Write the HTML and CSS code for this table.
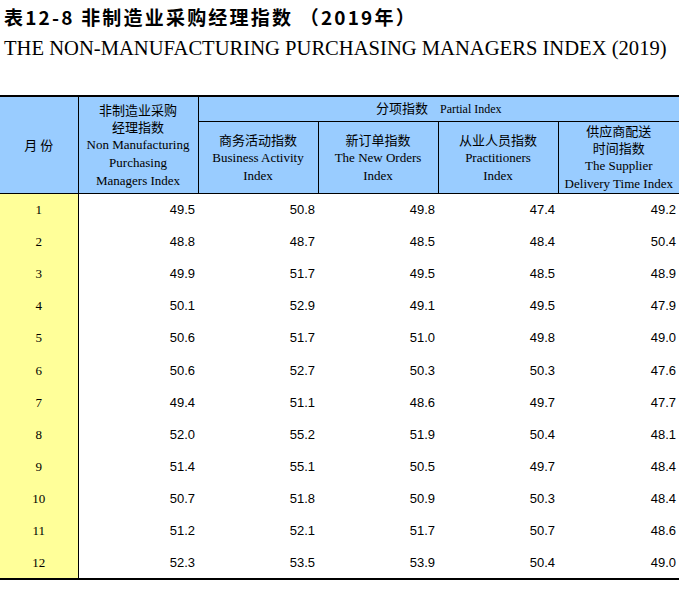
FILE: index.html
```html
<!DOCTYPE html>
<html lang="zh">
<head>
<meta charset="utf-8">
<title>表12-8 非制造业采购经理指数</title>
<link rel="stylesheet" href="styles.css">
</head>
<body>
<div class="titles">
  <h1 class="title-cn">表12-8 非制造业采购经理指数 （2019年）</h1>
  <h2 class="title-en">THE NON-MANUFACTURING PURCHASING MANAGERS INDEX (2019)</h2>
</div>
<table class="pmi">
  <colgroup>
    <col class="c-month">
    <col class="c-num">
    <col class="c-num">
    <col class="c-num">
    <col class="c-num">
    <col class="c-last">
  </colgroup>
  <thead>
    <tr class="h1">
      <th rowspan="2" class="hm"><span class="cn">月 份</span></th>
      <th rowspan="2" class="hc"><span class="cn">非制造业采购<br>经理指数</span><br><span class="en">Non Manufacturing<br>Purchasing<br>Managers Index</span></th>
      <th colspan="4" class="hp"><span class="cn">分项指数</span>&nbsp;&nbsp; <span class="en">Partial Index</span></th>
    </tr>
    <tr class="h2">
      <th class="hc"><span class="cn">商务活动指数</span><br><span class="en">Business Activity<br>Index</span></th>
      <th class="hc"><span class="cn">新订单指数</span><br><span class="en">The New Orders<br>Index</span></th>
      <th class="hc"><span class="cn">从业人员指数</span><br><span class="en">Practitioners<br>Index</span></th>
      <th class="hc hl"><span class="cn">供应商配送<br>时间指数</span><br><span class="en">The Supplier<br>Delivery Time Index</span></th>
    </tr>
  </thead>
  <tbody>
    <tr><td class="m">1</td><td>49.5</td><td>50.8</td><td>49.8</td><td>47.4</td><td class="l">49.2</td></tr>
    <tr><td class="m">2</td><td>48.8</td><td>48.7</td><td>48.5</td><td>48.4</td><td class="l">50.4</td></tr>
    <tr><td class="m">3</td><td>49.9</td><td>51.7</td><td>49.5</td><td>48.5</td><td class="l">48.9</td></tr>
    <tr><td class="m">4</td><td>50.1</td><td>52.9</td><td>49.1</td><td>49.5</td><td class="l">47.9</td></tr>
    <tr><td class="m">5</td><td>50.6</td><td>51.7</td><td>51.0</td><td>49.8</td><td class="l">49.0</td></tr>
    <tr><td class="m">6</td><td>50.6</td><td>52.7</td><td>50.3</td><td>50.3</td><td class="l">47.6</td></tr>
    <tr><td class="m">7</td><td>49.4</td><td>51.1</td><td>48.6</td><td>49.7</td><td class="l">47.7</td></tr>
    <tr><td class="m">8</td><td>52.0</td><td>55.2</td><td>51.9</td><td>50.4</td><td class="l">48.1</td></tr>
    <tr><td class="m">9</td><td>51.4</td><td>55.1</td><td>50.5</td><td>49.7</td><td class="l">48.4</td></tr>
    <tr><td class="m">10</td><td>50.7</td><td>51.8</td><td>50.9</td><td>50.3</td><td class="l">48.4</td></tr>
    <tr><td class="m">11</td><td>51.2</td><td>52.1</td><td>51.7</td><td>50.7</td><td class="l">48.6</td></tr>
    <tr><td class="m">12</td><td>52.3</td><td>53.5</td><td>53.9</td><td>50.4</td><td class="l">49.0</td></tr>
  </tbody>
</table>
</body>
</html>
```

FILE: styles.css
```css
html, body {
  margin: 0;
  padding: 0;
  background: #ffffff;
  color: #000000;
}

.titles {
  padding: 4px 0 0 4px;
  height: 90px;
  box-sizing: border-box;
}

.title-cn {
  margin: 0;
  font-family: "Noto Sans CJK SC", sans-serif;
  font-weight: bold;
  font-size: 19px;
  line-height: 26px;
  letter-spacing: 2.2px;
  white-space: nowrap;
}

.title-en {
  margin: 6px 0 0 0;
  font-family: "Liberation Serif", serif;
  font-weight: normal;
  font-size: 20.6px;
  line-height: 24px;
  letter-spacing: 0;
  white-space: nowrap;
}

.pmi {
  margin-top: 5px;
  width: 679px;
  border-collapse: collapse;
  table-layout: fixed;
  border-top: 2px solid #000;
  border-bottom: 2px solid #000;
}

.c-month { width: 78px; }
.c-num { width: 120px; }
.c-last { width: 121px; }

.pmi th {
  background: #99ccff;
  font-weight: normal;
  text-align: center;
  vertical-align: middle;
  padding: 0;
  line-height: 17px;
  border-right: 1px solid #000;
  border-bottom: 1px solid #000;
}

.pmi th.hl { border-right: none; }

.pmi .h1 th.hp { border-right: none; }

.pmi .h1 { height: 25px; }
.pmi .h2 { height: 72px; }

.cn {
  font-family: "Noto Sans CJK SC", sans-serif;
  font-size: 13px;
  line-height: 17px;
}

.en {
  font-family: "Liberation Serif", serif;
  font-size: 13px;
  line-height: 17px;
}

.hp .en { font-size: 12px; }

.pmi tbody tr { height: 32.2px; }

.pmi td {
  padding: 1px 3px 0 0;
  text-align: right;
  vertical-align: middle;
  font-family: "Liberation Sans", sans-serif;
  font-size: 13px;
  line-height: 16px;
}

.pmi td.m {
  background: #ffff99;
  text-align: center;
  padding: 1px 0 0 0;
  border-right: 1px solid #000;
  font-family: "Liberation Serif", serif;
  font-size: 13px;
}
```
